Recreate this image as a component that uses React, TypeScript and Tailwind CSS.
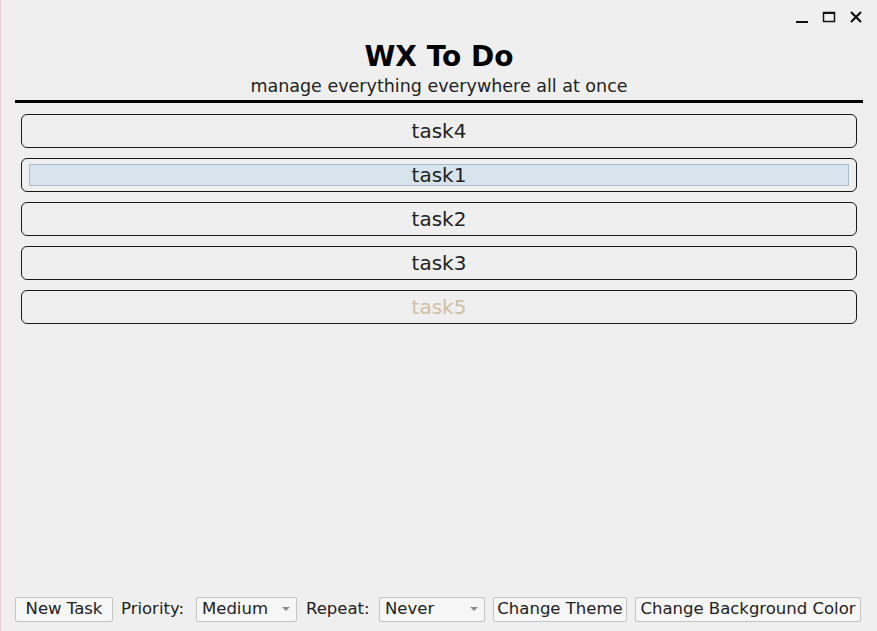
import React from "react";

const tasks = [
  { name: "task4", selected: false, done: false },
  { name: "task1", selected: true, done: false },
  { name: "task2", selected: false, done: false },
  { name: "task3", selected: false, done: false },
  { name: "task5", selected: false, done: true },
];

const Chevron = () => (
  <svg width="8" height="5" viewBox="0 0 8 5" className="text-[#8a8a8a]">
    <path d="M0 0 L8 0 L4 4 Z" fill="currentColor" />
  </svg>
);

const App = () => {
  return (
    <div
      className="w-[877px] h-[631px] bg-[#efefef] border-l border-[#e6ccd6] flex flex-col text-[#1a1a1a] overflow-hidden"
      style={{ fontFamily: '"DejaVu Sans", "Open Sans", sans-serif' }}
    >
      {/* window controls */}
      <div className="h-[32px] flex justify-end items-center gap-[13px] pr-[14px] pt-[2px]">
        <svg width="14" height="14" viewBox="0 0 14 14">
          <rect x="1" y="11" width="12" height="2" fill="#111" />
        </svg>
        <svg width="14" height="14" viewBox="0 0 14 14">
          <rect x="1.5" y="2.5" width="11" height="9" fill="none" stroke="#111" strokeWidth="1.5" />
          <rect x="1" y="2" width="12" height="2" fill="#111" />
        </svg>
        <svg width="14" height="14" viewBox="0 0 14 14">
          <path d="M2 2 L12 12 M12 2 L2 12" stroke="#111" strokeWidth="2.2" />
        </svg>
      </div>

      <div className="flex flex-col items-center mt-[7px]">
        <h1 className="text-[28px] leading-[35px] font-bold text-black">WX To Do</h1>
        <p className="text-[17.5px] leading-[22px] mt-[1px] text-[#222]">manage everything everywhere all at once</p>
      </div>

      <div className="mx-[14px] mt-[3px] h-[3px] bg-black" />

      <div className="flex flex-col gap-[10px] px-[20px] pt-[11px]">
        {tasks.map((t) => (
          <div
            key={t.name}
            className="h-[34px] border border-[#1a1a1a] rounded-[6px] flex items-center justify-center px-[7px]"
          >
            {t.selected ? (
              <div className="w-full h-[22px] bg-[#d8e4ed] border border-[#a9bccb] flex items-center justify-center">
                <span className="text-[20px] text-[#222]">{t.name}</span>
              </div>
            ) : (
              <span className={t.done ? "text-[20px] text-[#d3bea3]" : "text-[20px] text-[#222]"}>{t.name}</span>
            )}
          </div>
        ))}
      </div>

      <div className="flex-1" />

      <div className="flex items-center gap-[8px] px-[14px] pb-[9px] text-[16.5px] text-[#222]">
        <button className="h-[25px] w-[98px] bg-[#f6f6f6] border border-[#c4c4c4] rounded-[2px] flex items-center justify-center">New Task</button>
        <span className="w-[67px]">Priority:</span>
        <div className="h-[25px] w-[101px] bg-[#f6f6f6] border border-[#c4c4c4] rounded-[2px] flex items-center justify-between pl-[5px] pr-[6px]">
          <span>Medium</span>
          <Chevron />
        </div>
        <span className="w-[65px] ml-[1px]">Repeat:</span>
        <div className="h-[25px] w-[106px] bg-[#f6f6f6] border border-[#c4c4c4] rounded-[2px] flex items-center justify-between pl-[5px] pr-[6px]">
          <span>Never</span>
          <Chevron />
        </div>
        <button className="h-[25px] w-[134px] bg-[#f6f6f6] border border-[#c4c4c4] rounded-[2px] flex items-center justify-center whitespace-nowrap">Change Theme</button>
        <button className="h-[25px] w-[226px] bg-[#f6f6f6] border border-[#c4c4c4] rounded-[2px] flex items-center justify-center whitespace-nowrap">Change Background Color</button>
      </div>
    </div>
  );
};

export default App;
